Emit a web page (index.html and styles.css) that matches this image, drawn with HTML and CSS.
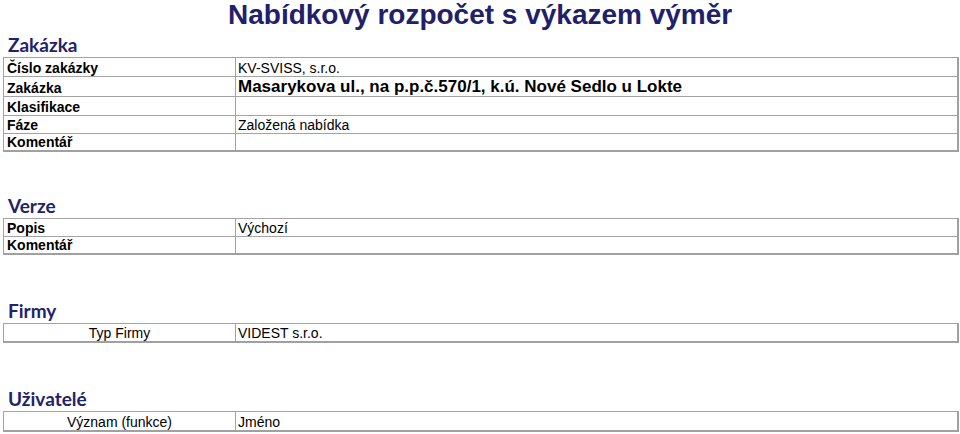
FILE: index.html
```html
<!DOCTYPE html>
<html lang="cs">
<head>
<meta charset="utf-8">
<title>Nabídkový rozpočet s výkazem výměr</title>
<link rel="stylesheet" href="styles.css">
</head>
<body>
<h1 class="title">Nabídkový rozpočet s výkazem výměr</h1>

<section class="block block-zakazka">
  <h2 class="heading">Zakázka</h2>
  <div class="sheet sheet-zakazka">
    <div class="cell label">Číslo zakázky</div><div class="cell value">KV-SVISS, s.r.o.</div>
    <div class="cell label">Zakázka</div><div class="cell value value-strong">Masarykova ul., na p.p.č.570/1, k.ú. Nové Sedlo u Lokte</div>
    <div class="cell label">Klasifikace</div><div class="cell value"></div>
    <div class="cell label">Fáze</div><div class="cell value">Založená nabídka</div>
    <div class="cell label last">Komentář</div><div class="cell value last"></div>
  </div>
</section>

<section class="block block-verze">
  <h2 class="heading">Verze</h2>
  <div class="sheet sheet-verze">
    <div class="cell label">Popis</div><div class="cell value">Výchozí</div>
    <div class="cell label last">Komentář</div><div class="cell value last"></div>
  </div>
</section>

<section class="block block-firmy">
  <h2 class="heading">Firmy</h2>
  <div class="sheet sheet-single">
    <div class="cell label label-plain last">Typ Firmy</div><div class="cell value last">VIDEST s.r.o.</div>
  </div>
</section>

<section class="block block-uzivatele">
  <h2 class="heading">Uživatelé</h2>
  <div class="sheet sheet-single sheet-tall">
    <div class="cell label label-plain last">Význam (funkce)</div><div class="cell value last">Jméno</div>
  </div>
</section>
</body>
</html>
```

FILE: styles.css
```css
html, body {
  margin: 0;
  padding: 0;
  background: #ffffff;
}

body {
  width: 956px;
  padding-left: 3px;
  font-family: "Liberation Sans", Arial, sans-serif;
  color: #000000;
}

.title {
  margin: 0 0 0 225px;
  height: 30px;
  font-size: 28px;
  line-height: 30px;
  font-weight: 700;
  color: #20206b;
  white-space: nowrap;
}

.block-zakazka { margin-top: 5px; }
.block-verze { margin-top: 44px; }
.block-firmy { margin-top: 46px; }
.block-uzivatele { margin-top: 46px; }

.heading {
  margin: 0 0 0 5px;
  height: 22px;
  font-family: Lato, "Open Sans", sans-serif;
  font-size: 19px;
  line-height: 20px;
  font-weight: 700;
  color: #22226b;
}

.sheet {
  display: grid;
  grid-template-columns: 232px 1fr;
  border: 1px solid #a3a3a3;
  border-right: 2px solid #a0a0a0;
  border-bottom: 2px solid #a0a0a0;
}

.sheet-zakazka { grid-template-rows: 19px 20px 19px 18px 16px; }
.sheet-verze { grid-template-rows: 18px 16px; }
.sheet-single { grid-template-rows: 17px; }
.sheet-tall { grid-template-rows: 18px; }

.cell {
  box-sizing: border-box;
  display: flex;
  align-items: flex-end;
  border-bottom: 1px solid #a3a3a3;
  font-size: 14px;
  line-height: 16px;
  white-space: nowrap;
  overflow: hidden;
}

.cell.last { border-bottom: 0; }

.label {
  padding-left: 3px;
  border-right: 1px solid #a3a3a3;
  font-weight: 700;
}

.label-plain {
  justify-content: center;
  font-weight: 400;
  padding-left: 0;
}

.value {
  padding-left: 2px;
}

.value-strong {
  font-size: 17px;
  line-height: 19px;
  font-weight: 700;
}
```
